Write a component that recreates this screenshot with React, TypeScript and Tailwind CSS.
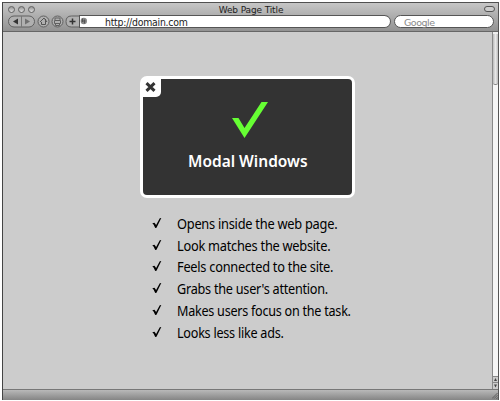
const items = [
  { text: "Opens inside the web page.", fit: "scale-x-[.950]" },
  { text: "Look matches the website.", fit: "scale-x-[.948]" },
  { text: "Feels connected to the site.", fit: "scale-x-[.948]" },
  { text: "Grabs the user's attention.", fit: "scale-x-[.938]" },
  { text: "Makes users focus on the task.", fit: "scale-x-[.933]" },
  { text: "Looks less like ads.", fit: "scale-x-[.935]" },
];

function Light() {
  return <span className="h-[7px] w-[7px] rounded-full border border-[#606060] bg-linear-to-b from-[#999] to-[#ddd]" />;
}

function Tools() {
  return (
    <svg className="h-[13px] w-[86px] shrink-0" viewBox="0 0 86 13">
      <g fill="#b0b0b0" stroke="#606060" strokeWidth="1">
        <path d="M64 1h-.5q-5.500 0-5.500 5.500t5.500 5.500H72V1z" />
        <rect x=".5" y="1" width="26" height="11" rx="5.5" />
        <path d="M13.5 1v11" stroke="#777" />
        <circle cx="35.5" cy="6.5" r="5.5" />
        <circle cx="49.5" cy="6.5" r="5.5" />
      </g>
      <path d="M10 3.500v6L5 6.500z" fill="#333" />
      <path d="M17 3.500v6l5-3z" fill="#707070" />
      <path d="M32 7l4-4 3 4M33.500 7v2.500h4V4" fill="none" stroke="#555" />
      <path d="M47 5V3h5v2M46.500 5.500h6v3h-6zM47.500 8.500v2h4v-2" fill="none" stroke="#606060" />
      <path d="M64.500 3.500v6M61.500 6.500h6" stroke="#333" strokeWidth="1.500" />
      <path d="M71.500 1H86v11H71.500z" fill="#fff" />
      <path d="M71.500 .5v12M71 .5h15M71 12.500h15" stroke="#555" />
      <circle cx="75.800" cy="6" r="3.200" fill="#888" />
      <path d="M74.500 3.500v3.500M76.500 4.500v4M73.500 6h4" stroke="#555" />
    </svg>
  );
}

export default function App() {
  return (
    <div className="h-[401px] w-[500px] overflow-hidden bg-white pl-[2px] pt-[2px] font-['Noto_Sans',sans-serif]">
      <div className="flex h-[398px] w-[497px] flex-col border-l border-r border-l-[#444] border-r-[#555]">
        <header className="h-[30px] shrink-0 border-b border-t border-b-[#666] border-t-[#505050] bg-linear-to-b from-[#c6c6c6] to-[#929292]">
          <div className="flex h-[12px] items-center pl-[5px] pr-[3px]">
            <div className="flex w-[60px] gap-[3px]"><Light /><Light /><Light /></div>
            <h1 className="ml-[30px] mr-[80px] flex-1 whitespace-nowrap pt-[2px] text-center font-['DejaVu_Sans',sans-serif] text-[9px] leading-[12px] tracking-[-0.13px] text-[#222]">Web Page Title</h1>
            <span className="h-[6px] w-[11px] rounded-full border border-[#555] bg-[#ccc]" />
          </div>
          <div className="flex h-[13px] pl-[5px] font-['DejaVu_Sans',sans-serif]">
            <Tools />
            <div className="flex h-[13px] w-[297px] items-center rounded-r-full border border-l-0 border-[#555] bg-white pl-[11px] pt-[2px] text-[#222]">
              <span className="origin-left scale-x-[.935] whitespace-nowrap text-[10px] leading-[11px] tracking-[-0.25px]">http://domain.com</span>
            </div>
            <div className="ml-[3px] flex h-[13px] w-[100px] items-center rounded-full border border-[#555] bg-white pl-[9px] pt-[2px] text-[9.5px] leading-[11px] tracking-[-0.5px] text-[#888]">Google</div>
          </div>
        </header>

        <div className="flex min-h-0 flex-1 bg-[#ccc]">
          <main className="w-[489px] pl-[137px] pt-[44px]">
            <section className="h-[122px] w-[215px] rounded-[7px] border-[3px] border-white bg-[#333]">
              <button aria-label="Close" className="flex h-[18px] w-[18px] items-center justify-center rounded-br-[5px] bg-white">
                <svg className="mb-[3px] mr-[3px] h-[10px] w-[11px]" viewBox="0 0 11 10"><path d="M1.500 1.200l8 7.600M9.500 1.200l-8 7.600" stroke="#333" strokeWidth="3" /></svg>
              </button>
              <svg className="ml-[89px] mt-[5px] h-[37px] w-[37px]" viewBox="0 0 37 37">
                <path d="M0 16h6.500l6 10L29.500 0H36L12.500 36z" fill="#6f3" />
              </svg>
              <h2 className="ml-[45px] mt-[10px] h-[24px] w-[124px] origin-left scale-x-[.968] whitespace-nowrap text-[16px] font-semibold leading-[24px] text-white">Modal Windows</h2>
            </section>
            <ul className="mt-[15px] pl-[12px]">
              {items.map((item) => (
                <li key={item.text} className="flex h-[21.8px] items-center">
                  <svg className="mb-[2px] h-[10px] w-[25px] shrink-0" viewBox="0 0 25 10"><path d="M.3 5.200l2.200-.5 1.600 2.200L7.800.3l1.500-.3L4.500 9.700l-1.300.3-1.500-3.300z" /></svg>
                  <span className={`origin-left whitespace-nowrap text-[13.5px] leading-[20px] tracking-[-0.27px] text-black ${item.fit}`}>{item.text}</span>
                </li>
              ))}
            </ul>
          </main>
          <aside className="flex w-[6px] flex-col border-l border-[#888] bg-[#f5f5f5]">
            <div className="h-[2px] bg-[#eee]" />
            <div className="h-[51px] rounded-b-[2px] border-b border-[#888] bg-linear-to-r from-[#bbb] via-[#e8e8e8] to-[#bbb]" />
            <div className="flex-1" />
            <svg className="h-[13px] w-[5px]" viewBox="0 0 5 13"><path d="M0 0h5v13H0z" fill="#ccc" /><path d="M0 .5h5M0 6.500h5" stroke="#888" /><path d="M1 5l1.500-3L4 5zM1 8.500h3l-1.500 3z" fill="#444" /></svg>
          </aside>
        </div>
        <footer className="flex h-[11px] shrink-0 items-end justify-end border-t border-[#777] bg-linear-to-b from-[#b9b9b9] to-[#858585]">
          <svg className="mb-[1px] h-[6px] w-[6px]" viewBox="0 0 7 7"><path d="M0 6.500l6.500-6.500M2.500 6.500L6.500 2.500M5 7l2-2" stroke="#555" /></svg>
        </footer>
      </div>
    </div>
  );
}
